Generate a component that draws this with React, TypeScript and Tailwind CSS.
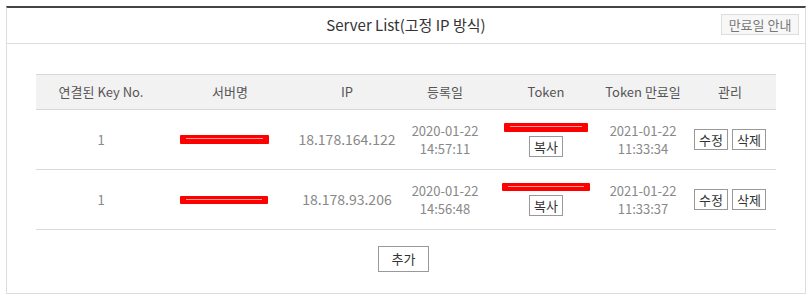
import React from 'react';

interface ServerRow {
  keyNo: number;
  ip: string;
  regDate: string;
  regTime: string;
  expDate: string;
  expTime: string;
  nameBar: string;
  tokenBar: string;
}

const rows: ServerRow[] = [
  {
    keyNo: 1,
    ip: '18.178.164.122',
    regDate: '2020-01-22',
    regTime: '14:57:11',
    expDate: '2021-01-22',
    expTime: '11:33:34',
    nameBar: 'w-[89px] h-[9px]',
    tokenBar: 'w-[84px] h-[9px]',
  },
  {
    keyNo: 1,
    ip: '18.178.93.206',
    regDate: '2020-01-22',
    regTime: '14:56:48',
    expDate: '2021-01-22',
    expTime: '11:33:37',
    nameBar: 'w-[88px] h-[8px]',
    tokenBar: 'w-[88px] h-[8px]',
  },
];

// 가려진 텍스트 표시용 빨간 줄
const Redact = ({ className }: { className: string }) => (
  <div className={`relative bg-[#ff0000] rounded-[1px] ${className}`}>
    <div className="absolute left-[6px] right-[6px] top-[3px] h-px bg-[#ff9a9a]" />
  </div>
);

const SmallButton = ({ label }: { label: string }) => (
  <button
    type="button"
    className="h-[21px] w-[34px] border border-[#999] bg-white text-[13px] leading-none text-[#333]"
  >
    {label}
  </button>
);

export default function App() {
  return (
    <div
      className="p-[6px] bg-white"
      style={{ fontFamily: '"Noto Sans CJK KR", "Noto Sans", sans-serif' }}
    >
      <div className="border border-[#ddd] border-t-2 border-t-[#444]">
        {/* 헤더 */}
        <div className="relative flex h-[36px] items-center justify-center border-b border-[#ddd]">
          <h2 className="text-[15px] text-[#333]">Server List(고정 IP 방식)</h2>
          <button
            type="button"
            className="absolute right-[6px] top-[6px] h-[21px] w-[78px] border border-[#ddd] bg-[#f7f7f7] text-[13px] leading-none text-[#777]"
          >
            만료일 안내
          </button>
        </div>

        {/* 목록 */}
        <div className="px-[29px] pt-[30px] pb-[21px]">
          <table className="w-full table-fixed border-collapse text-center text-[13px]">
            <thead>
              <tr className="h-[35px] bg-[#f2f2f2] border-t border-b border-[#d9d9d9] text-[#555]">
                <th className="w-[130px] font-normal">연결된 Key No.</th>
                <th className="w-[128px] font-normal">서버명</th>
                <th className="w-[106px] font-normal">IP</th>
                <th className="w-[90px] font-normal">등록일</th>
                <th className="w-[112px] font-normal">Token</th>
                <th className="w-[82px] font-normal">Token 만료일</th>
                <th className="w-[92px] font-normal">관리</th>
              </tr>
            </thead>
            <tbody className="text-[#888]">
              {rows.map((row, i) => (
                <tr key={i} className="h-[60px] border-b border-[#d9d9d9]">
                  <td>{row.keyNo}</td>
                  <td>
                    <div className="flex justify-center pr-[12px]">
                      <Redact className={row.nameBar} />
                    </div>
                  </td>
                  <td className="text-[14px]">{row.ip}</td>
                  <td className="leading-[18px]">
                    <div>{row.regDate}</div>
                    <div>{row.regTime}</div>
                  </td>
                  <td>
                    <div className="flex flex-col items-center gap-[4px]">
                      <Redact className={row.tokenBar} />
                      <SmallButton label="복사" />
                    </div>
                  </td>
                  <td className="leading-[18px]">
                    <div>{row.expDate}</div>
                    <div>{row.expTime}</div>
                  </td>
                  <td>
                    <div className="flex justify-center gap-[4px]">
                      <SmallButton label="수정" />
                      <SmallButton label="삭제" />
                    </div>
                  </td>
                </tr>
              ))}
            </tbody>
          </table>

          <div className="mt-[16px] flex justify-center pr-[5px]">
            <button
              type="button"
              className="h-[26px] w-[51px] border border-[#999] bg-white text-[13px] text-[#333]"
            >
              추가
            </button>
          </div>
        </div>
      </div>
    </div>
  );
}
